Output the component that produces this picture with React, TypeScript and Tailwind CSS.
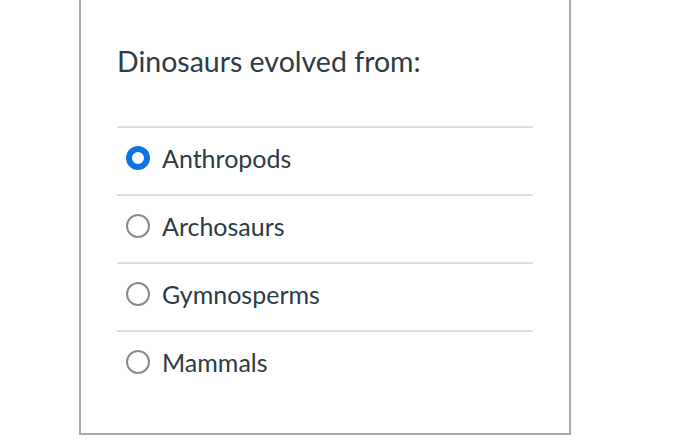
const options = ["Anthropods", "Archosaurs", "Gymnosperms", "Mammals"];

export default function App() {
  const selected = 0;
  return (
    <div className="min-h-screen bg-white" style={{ fontFamily: "Lato, 'Open Sans', sans-serif" }}>
      <div className="ml-[79px] w-[492px] border-2 border-t-0 border-[#a9a9a9] px-[36px] pt-[43px] pb-[35px]">
        <h1 className="text-[28.5px] leading-[36px] text-[#2d3b45] mb-[47px]">Dinosaurs evolved from:</h1>
        <div>
          {options.map((opt, i) => (
            <label
              key={opt}
              className="flex items-center gap-[12px] h-[68px] border-t-2 border-[#dedede] pl-[9px] pb-[6px]"
            >
              <span
                className={
                  i === selected
                    ? "w-[24px] h-[24px] rounded-full border-[6px] border-[#0c74e4] bg-white"
                    : "w-[24px] h-[24px] rounded-full border-2 border-[#8a8a8a] bg-white"
                }
              />
              <span className="text-[25px] leading-[30px] text-[#2d3b45]">{opt}</span>
            </label>
          ))}
        </div>
      </div>
    </div>
  );
}
